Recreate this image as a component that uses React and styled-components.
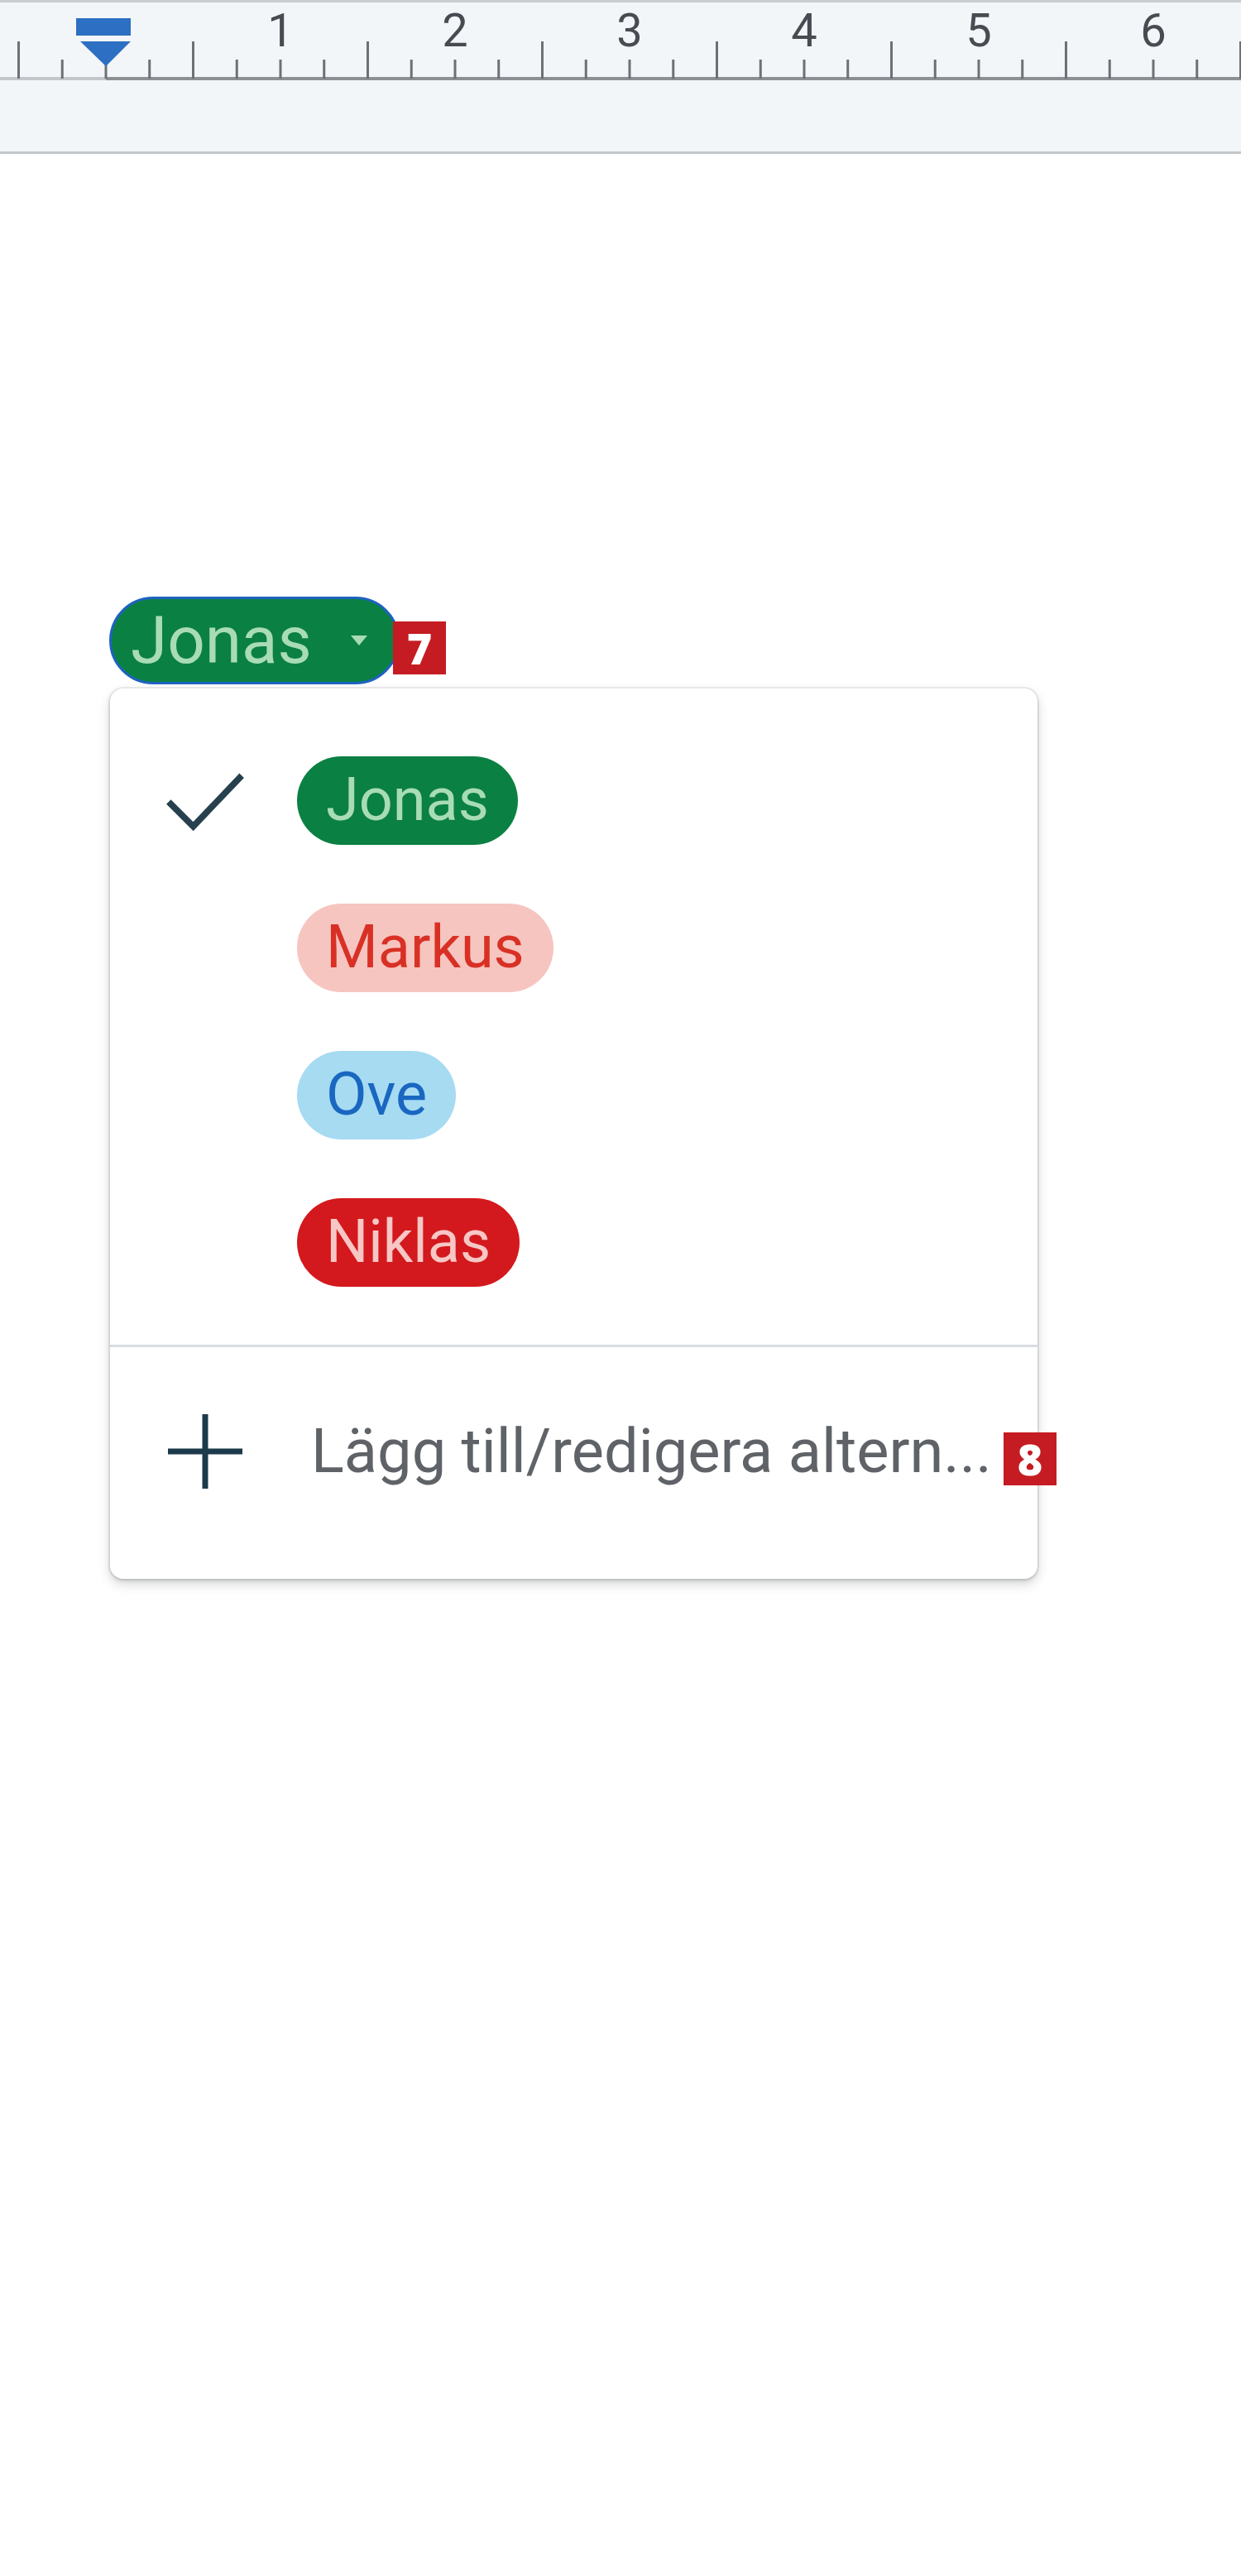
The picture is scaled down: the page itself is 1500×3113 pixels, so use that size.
import React from "react";
import styled, { createGlobalStyle } from "styled-components";

const GlobalStyle = createGlobalStyle`
  html, body {
    margin: 0;
    padding: 0;
    background: #ffffff;
  }
  body {
    font-family: Roboto, "Noto Sans", Arial, sans-serif;
    min-height: 3113px;
  }
`;

const RulerBar = styled.div`
  height: 180px;
  background: #f3f6f8;
  border-top: 3px solid #c9ccd0;
  border-bottom: 3px solid #c4c7cb;
  overflow: hidden;

  svg {
    display: block;
  }
`;

const Canvas = styled.div`
  padding: 535px 0 0 132px;
`;

const ChipWrap = styled.div`
  position: relative;
  width: 351px;
`;

const Chip = styled.div`
  box-sizing: border-box;
  display: flex;
  align-items: center;
  width: 351px;
  height: 106px;
  padding: 0 36px 0 23px;
  border: 3px solid #1d63c0;
  border-radius: 53px;
  background: #0b8043;
  color: #a8dcb6;
  font-size: 80px;
  line-height: 1;
`;

const Caret = styled.span`
  margin-left: auto;
  width: 0;
  height: 0;
  border-left: 10px solid transparent;
  border-right: 10px solid transparent;
  border-top: 12px solid #a8dcb6;
`;

const Badge = styled.span`
  box-sizing: border-box;
  display: inline-flex;
  flex: none;
  align-items: center;
  justify-content: center;
  width: 64px;
  height: 64px;
  background: #c41c22;
  color: #ffffff;
  font-family: "Open Sans", Roboto, sans-serif;
  font-weight: 800;
  font-size: 52px;
  line-height: 1;
`;

const ChipBadge = styled(Badge)`
  position: absolute;
  left: 343px;
  top: 30px;
`;

const Menu = styled.div`
  box-sizing: border-box;
  width: 1121px;
  margin: 5px 0 0 1px;
  padding: 46px 0 65px;
  background: #ffffff;
  border-radius: 16px;
  box-shadow: 0 0 0 2px rgba(60, 64, 67, 0.08), 0 6px 14px rgba(60, 64, 67, 0.22),
    0 2px 4px rgba(60, 64, 67, 0.15);
`;

const Option = styled.div`
  display: flex;
  align-items: center;
  height: 178px;
  padding-left: 67px;
`;

const IconBox = styled.span`
  display: flex;
  align-items: center;
  justify-content: center;
  width: 96px;
  height: 96px;
  flex: none;
  margin-right: ${(p) => p.$gap}px;
`;

const Pill = styled.span`
  display: inline-flex;
  align-items: center;
  height: 107px;
  padding: 0 35px;
  border-radius: 54px;
  background: ${(p) => p.$bg};
  color: ${(p) => p.$fg};
  font-size: 72px;
  line-height: 1;
  white-space: nowrap;
`;

const Divider = styled.div`
  height: 3px;
  margin: 35px 0 37px;
  background: #dadde0;
`;

const AddLabel = styled.span`
  flex: none;
  color: #5f6368;
  font-size: 74px;
  line-height: 1;
  white-space: nowrap;
`;

const AddBadge = styled(Badge)`
  margin: 18px 0 0 14px;
`;

const options = [
  { name: "Jonas", bg: "#0b8043", fg: "#a8dcb6", checked: true },
  { name: "Markus", bg: "#f6c5bf", fg: "#d93025" },
  { name: "Ove", bg: "#a6dbf2", fg: "#1967c0" },
  { name: "Niklas", bg: "#d3191d", fg: "#f7c7c5" },
];

function Ruler() {
  const zero = 128;
  const quarter = 52.75;
  const ticks = [];
  for (let k = -2; k <= 26; k++) {
    const x = zero + quarter * k;
    if (k === 0) continue;
    const tall = ((k % 4) + 4) % 4 === 2;
    ticks.push(
      <line key={k} x1={x} x2={x} y1={tall ? 50 : 72} y2={95} stroke="#6d7176" strokeWidth="3" />
    );
  }
  const numbers = [1, 2, 3, 4, 5, 6];
  return (
    <RulerBar>
      <svg width="1500" height="180" viewBox="0 3 1500 180">
        <line x1="0" x2={zero} y1="95" y2="95" stroke="#c3c7cb" strokeWidth="4" />
        <line x1={zero} x2="1500" y1="95" y2="95" stroke="#8c9094" strokeWidth="4" />
        {ticks}
        <line x1={zero} x2={zero} y1="78" y2="95" stroke="#6d7176" strokeWidth="3" />
        {numbers.map((n) => (
          <text
            key={n}
            x={zero + 211 * n}
            y="56"
            textAnchor="middle"
            fontFamily="Roboto, sans-serif"
            fontSize="56"
            fill="#474c52"
          >
            {n}
          </text>
        ))}
        <rect x="92" y="22" width="66" height="21" fill="#2d6fc2" />
        <polygon points="97,50 158,50 128,80" fill="#2d6fc2" />
      </svg>
    </RulerBar>
  );
}

function CheckIcon() {
  return (
    <svg width="100" height="80" viewBox="0 0 100 80">
      <polyline points="4,42 35,73 96,9" fill="none" stroke="#27404d" strokeWidth="8" />
    </svg>
  );
}

function PlusIcon() {
  return (
    <svg width="92" height="92" viewBox="0 0 92 92">
      <line x1="46" y1="1" x2="46" y2="91" stroke="#1d3a4a" strokeWidth="7" />
      <line x1="1" y1="46" x2="91" y2="46" stroke="#1d3a4a" strokeWidth="7" />
    </svg>
  );
}

export default function App() {
  return (
    <>
      <GlobalStyle />
      <Ruler />
      <Canvas>
        <ChipWrap>
          <Chip>
            Jonas
            <Caret />
          </Chip>
          <ChipBadge>7</ChipBadge>
        </ChipWrap>
        <Menu>
          {options.map((o) => (
            <Option key={o.name}>
              <IconBox $gap={63}>{o.checked && <CheckIcon />}</IconBox>
              <Pill $bg={o.bg} $fg={o.fg}>
                {o.name}
              </Pill>
            </Option>
          ))}
          <Divider />
          <Option>
            <IconBox $gap={80}>
              <PlusIcon />
            </IconBox>
            <AddLabel>Lägg till/redigera altern...</AddLabel>
            <AddBadge>8</AddBadge>
          </Option>
        </Menu>
      </Canvas>
    </>
  );
}
